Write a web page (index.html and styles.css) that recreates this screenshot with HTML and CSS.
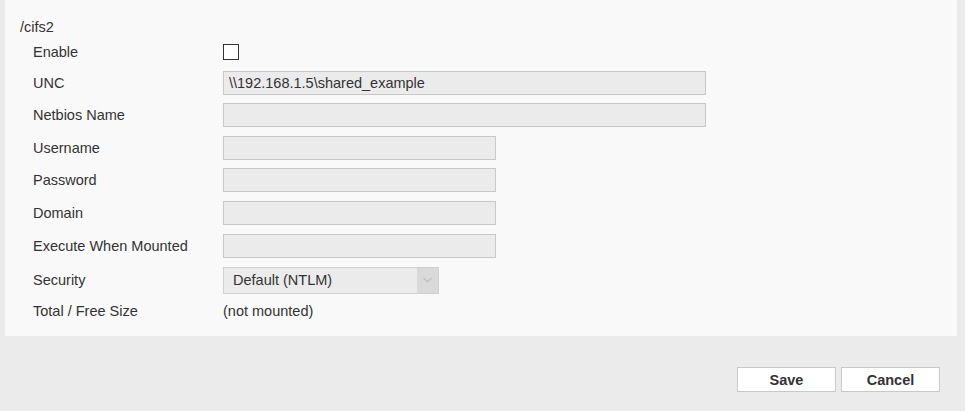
FILE: index.html
```html
<!DOCTYPE html>
<html>
<head>
<meta charset="utf-8">
<link rel="stylesheet" href="styles.css">
</head>
<body>
<div class="panel">
  <div class="title">/cifs2</div>
  <div class="form">
    <div class="row first"><div class="label">Enable</div><div class="field"><span class="checkbox"></span></div></div>
    <div class="row"><div class="label">UNC</div><div class="field"><div class="input wide">\\192.168.1.5\shared_example</div></div></div>
    <div class="row"><div class="label">Netbios Name</div><div class="field"><div class="input wide"></div></div></div>
    <div class="row"><div class="label">Username</div><div class="field"><div class="input narrow"></div></div></div>
    <div class="row"><div class="label">Password</div><div class="field"><div class="input narrow"></div></div></div>
    <div class="row"><div class="label">Domain</div><div class="field"><div class="input narrow"></div></div></div>
    <div class="row"><div class="label">Execute When Mounted</div><div class="field"><div class="input narrow"></div></div></div>
    <div class="row sel"><div class="label">Security</div><div class="field"><div class="select"><span class="sel-text">Default (NTLM)</span><span class="arrow"><svg width="9" height="6" viewBox="0 0 9 6"><path d="M0.5 0.8 L4.5 4.8 L8.5 0.8" fill="none" stroke="#bdbdbd" stroke-width="1.2"/></svg></span></div></div></div>
    <div class="row plain"><div class="label">Total / Free Size</div><div class="field">(not mounted)</div></div>
  </div>
</div>
<div class="actions">
  <button class="btn">Save</button>
  <button class="btn">Cancel</button>
</div>
</body>
</html>
```
FILE: styles.css
```css
html, body {
  margin: 0;
  padding: 0;
}
body {
  background: #ebebeb;
  font-family: "Liberation Sans", Arial, sans-serif;
  font-size: 14.5px;
  color: #333;
  width: 965px;
  height: 411px;
  overflow: hidden;
}
.panel {
  margin-left: 5px;
  width: 952px;
  height: 336px;
  background: #f9f9f9;
  box-sizing: border-box;
  padding-top: 18px;
}
.title {
  padding-left: 15px;
  height: 18px;
  line-height: 18px;
}
.form {
  padding-left: 28px;
  margin-top: 2px;
  display: flex;
  flex-direction: column;
}
.row {
  display: flex;
  align-items: center;
  height: 24px;
  margin-bottom: 8.6px;
}
.row.first {
  margin-top: 2px;
  margin-bottom: 6.6px;
}
.row.sel {
  height: 27px;
  margin-top: 0.5px;
  margin-bottom: 4px;
}
.row.plain {
  height: 27px;
}
.label {
  width: 190px;
  flex: none;
}
.field {
  display: flex;
  align-items: center;
}
.checkbox {
  display: block;
  width: 14px;
  height: 14px;
  border: 1px solid #333;
  background: #fff;
}
.input {
  box-sizing: border-box;
  height: 24px;
  background: #ebebeb;
  border: 1px solid #c8c8c8;
  padding-left: 5px;
  line-height: 22px;
  color: #333;
}
.input.wide {
  width: 483px;
}
.input.narrow {
  width: 273px;
}
.select {
  box-sizing: border-box;
  width: 216px;
  height: 27px;
  background: #ebebeb;
  border: 1px solid #d0d0d0;
  display: flex;
  align-items: stretch;
}
.sel-text {
  flex: 1;
  padding-left: 9px;
  line-height: 25px;
}
.arrow {
  width: 21px;
  background: #d9d9d9;
  display: flex;
  align-items: center;
  justify-content: center;
}
.actions {
  display: flex;
  justify-content: flex-end;
  gap: 5px;
  padding-top: 31px;
  padding-right: 25px;
}
.btn {
  font-family: "Liberation Sans", Arial, sans-serif;
  font-size: 14.5px;
  font-weight: bold;
  color: #333;
  background: #fff;
  border: 1px solid #c8c8c8;
  height: 25px;
  width: 99px;
  padding: 0;
  margin: 0;
}
```
